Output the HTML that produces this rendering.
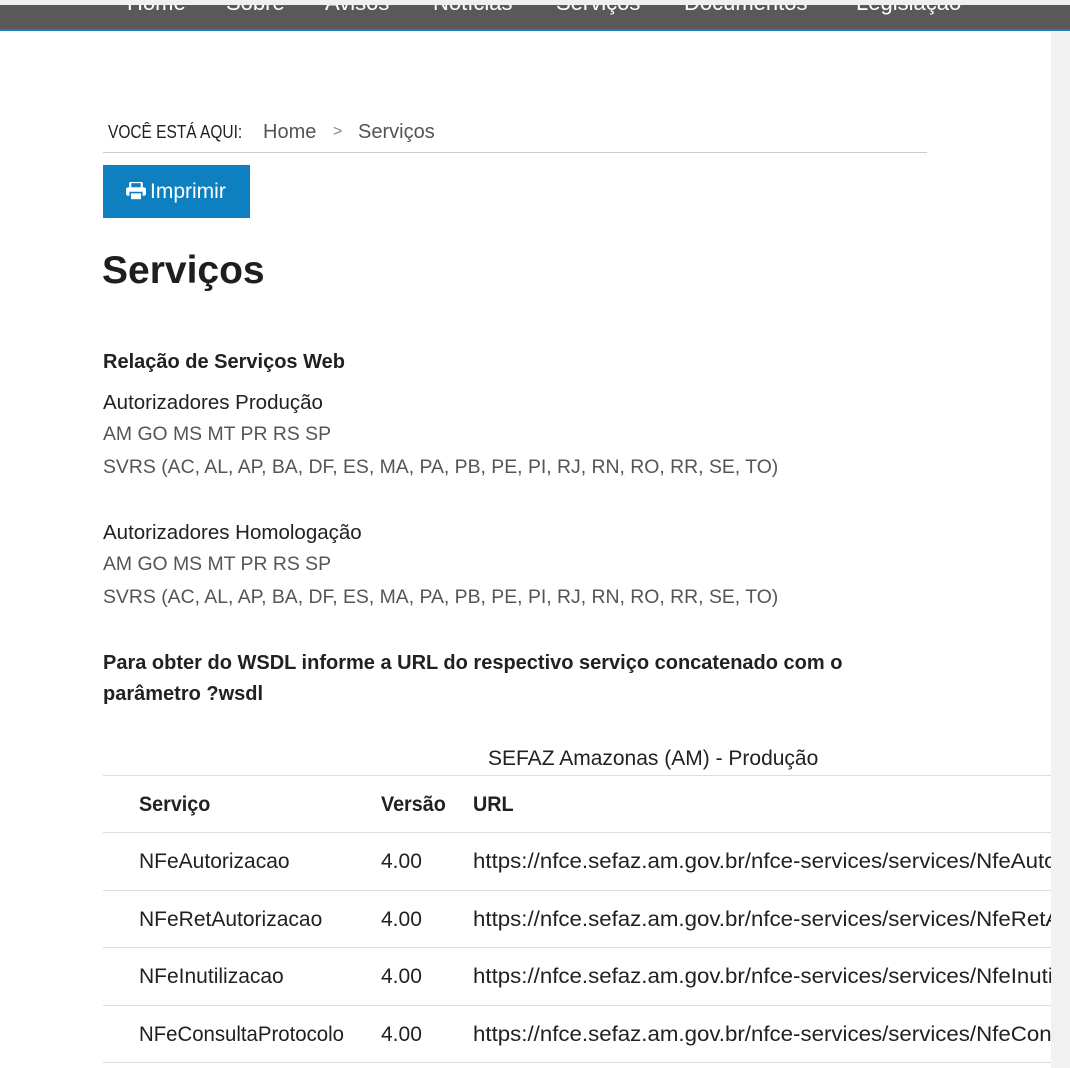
<!DOCTYPE html>
<html><head><meta charset="utf-8">
<style>
*{margin:0;padding:0;box-sizing:border-box}
html,body{width:1070px;height:1068px;overflow:hidden;background:#fff;font-family:"Liberation Sans",Arial,sans-serif;color:#212121}
.a{position:absolute;white-space:nowrap}
.top{position:absolute;left:0;top:0;width:1070px;height:5px;background:#f0f0f0}
.nav{position:absolute;left:0;top:5px;width:1070px;height:26px;background:#5a5859;border-bottom:2px solid #1a7fc0;overflow:hidden}
.nav span{position:absolute;top:-15px;color:#fff;font-size:22px}
.sb{position:absolute;left:1051px;top:32px;width:19px;height:1036px;background:#f1f1f1}
.g{color:#555;font-size:19.4px!important}
.hl{position:absolute;left:103px;width:948px;height:1px;background:#ddd}
.t{font-size:21px}
.u{transform:scaleX(1.06);transform-origin:left}
</style></head><body>
<div class="top"></div>
<div class="nav">
<span style="left:127px">Home</span><span style="left:226px">Sobre</span><span style="left:325px">Avisos</span><span style="left:433px">Notícias</span><span style="left:556px">Serviços</span><span style="left:684px">Documentos</span><span style="left:856px">Legislação</span>
</div>
<div class="sb"></div>

<div class="a" style="left:108px;top:122px;font-size:18px;transform:scaleX(.86);transform-origin:left">VOCÊ ESTÁ AQUI:</div>
<div class="a" style="left:263px;top:121px;font-size:20px;color:#555">Home</div>
<div class="a" style="left:333px;top:123px;font-size:16px;color:#888">&gt;</div>
<div class="a" style="left:358px;top:121px;font-size:20px;color:#555">Serviços</div>
<div class="a" style="left:103px;top:152px;width:824px;height:1px;background:#ccc"></div>

<div class="a" style="left:103px;top:165px;width:147px;height:53px;background:#0e80c0;color:#fff;font-size:21px;line-height:53px;padding-left:23px">
<svg width="20" height="18" viewBox="0 0 19 17" style="vertical-align:-2px;margin-right:4px"><rect x="4" y="0" width="11" height="6" rx="1.5" fill="none" stroke="#fff" stroke-width="2"/><rect x="0" y="5" width="19" height="8" rx="2" fill="#fff"/><rect x="4" y="10" width="11" height="7" fill="#fff" stroke="#0e80c0" stroke-width="1.5"/><rect x="5" y="11" width="9" height="5" fill="#fff"/></svg>Imprimir</div>

<div class="a" style="left:102px;top:249px;font-size:39px;font-weight:bold;color:#1e1e1e">Serviços</div>

<div class="a" style="left:103px;top:351px;font-size:20px;font-weight:bold">Relação de Serviços Web</div>
<div class="a" style="left:103px;top:391px;font-size:20.5px">Autorizadores Produção</div>
<div class="a g" style="left:103px;top:423px">AM GO MS MT PR RS SP</div>
<div class="a g" style="left:103px;top:456px">SVRS (AC, AL, AP, BA, DF, ES, MA, PA, PB, PE, PI, RJ, RN, RO, RR, SE, TO)</div>
<div class="a" style="left:103px;top:521px;font-size:20.5px">Autorizadores Homologação</div>
<div class="a g" style="left:103px;top:553px">AM GO MS MT PR RS SP</div>
<div class="a g" style="left:103px;top:586px">SVRS (AC, AL, AP, BA, DF, ES, MA, PA, PB, PE, PI, RJ, RN, RO, RR, SE, TO)</div>
<div class="a" style="left:103px;top:652px;font-size:20px;font-weight:bold">Para obter do WSDL informe a URL do respectivo serviço concatenado com o</div>
<div class="a" style="left:103px;top:683px;font-size:20px;font-weight:bold">parâmetro ?wsdl</div>

<div class="a t" style="left:488px;top:747px">SEFAZ Amazonas (AM) - Produção</div>
<div class="hl" style="top:775px"></div>
<div class="a" style="left:139px;top:793px;font-size:21px;font-weight:bold;transform:scaleX(.94);transform-origin:left">Serviço</div>
<div class="a" style="left:381px;top:793px;font-size:21px;font-weight:bold;transform:scaleX(.94);transform-origin:left">Versão</div>
<div class="a" style="left:473px;top:793px;font-size:21px;font-weight:bold;transform:scaleX(.94);transform-origin:left">URL</div>
<div class="hl" style="top:832px"></div>

<div style="position:absolute;left:0;top:0;width:1051px;height:1068px;overflow:hidden">
<div class="a t" style="left:139px;top:850px">NFeAutorizacao</div>
<div class="a t" style="left:381px;top:850px">4.00</div>
<div class="a t u" style="left:473px;top:850px">https://nfce.sefaz.am.gov.br/nfce-services/services/NfeAutorizacao4</div>
<div class="a t" style="left:139px;top:908px">NFeRetAutorizacao</div>
<div class="a t" style="left:381px;top:908px">4.00</div>
<div class="a t u" style="left:473px;top:908px">https://nfce.sefaz.am.gov.br/nfce-services/services/NfeRetAutorizacao4</div>
<div class="a t" style="left:139px;top:965px">NFeInutilizacao</div>
<div class="a t" style="left:381px;top:965px">4.00</div>
<div class="a t u" style="left:473px;top:965px">https://nfce.sefaz.am.gov.br/nfce-services/services/NfeInutilizacao4</div>
<div class="a t" style="left:139px;top:1023px;transform:scaleX(.97);transform-origin:left">NFeConsultaProtocolo</div>
<div class="a t" style="left:381px;top:1023px">4.00</div>
<div class="a t u" style="left:473px;top:1023px">https://nfce.sefaz.am.gov.br/nfce-services/services/NfeConsulta4</div>
</div>
<div class="hl" style="top:890px"></div>
<div class="hl" style="top:947px"></div>
<div class="hl" style="top:1005px"></div>
<div class="hl" style="top:1062px"></div>
</body></html>
